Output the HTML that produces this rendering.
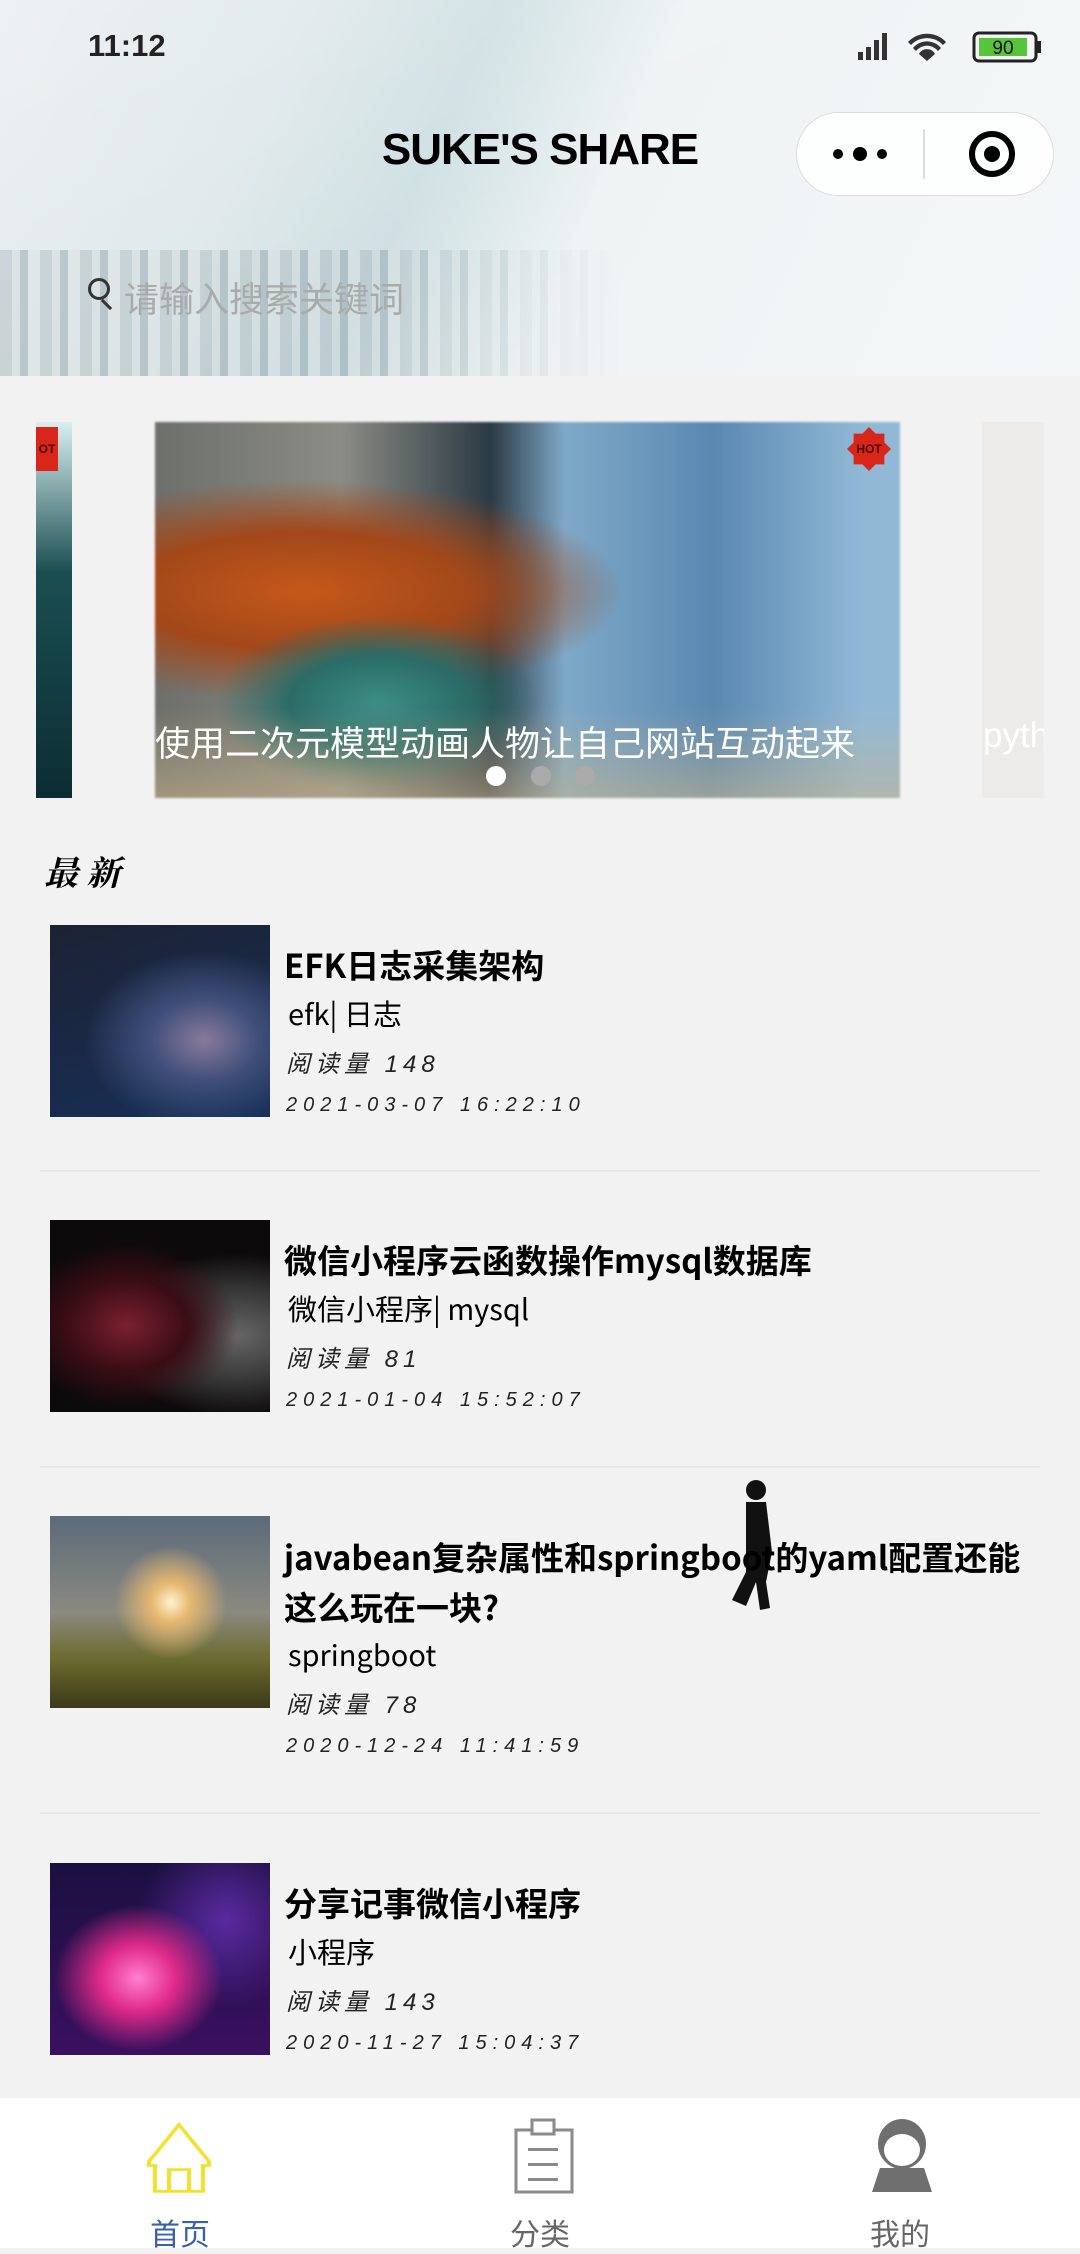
<!DOCTYPE html>
<html><head><meta charset="utf-8"><style>
*{margin:0;padding:0;box-sizing:border-box}
body{width:1080px;height:2248px;overflow:hidden;position:relative;background:#f3f2f2;font-family:"Liberation Sans","Noto Sans CJK SC",sans-serif;color:#000}
.abs{position:absolute}
.hdr{left:0;top:0;width:1080px;height:376px;background:
linear-gradient(160deg,rgba(255,255,255,.2) 0%,rgba(255,255,255,0) 50%),
linear-gradient(115deg,#e9eef0 0%,#dfe8ea 25%,#cfe0e3 40%,#eef3f4 55%,#f4f7f8 100%);overflow:hidden}
.shelf{left:0;top:250px;width:620px;height:126px;background:repeating-linear-gradient(90deg,#9aa9ae 0 12px,#c9d3d5 12px 20px,#6e8690 20px 28px,#d8dfe0 28px 40px);opacity:.35;-webkit-mask:linear-gradient(90deg,#000 60%,transparent)}
.time{left:88px;top:28px;font-size:31px;font-weight:bold;color:#222}
.title{left:0;width:1080px;top:125px;text-align:center;font-size:44px;font-weight:bold;letter-spacing:-1px}
.cap{left:796px;top:112px;width:258px;height:84px;border-radius:42px;background:rgba(255,255,255,.85);border:1px solid #ddd}
.sp{left:88px;top:278px;width:22px;height:22px;border:3px solid #333;border-radius:50%}
.sp2{left:105px;top:298px;width:3px;height:13px;background:#333;transform:rotate(-45deg)}
.ph{left:124px;top:272px;font-size:35px;color:#aaa}
.card{left:155px;top:422px;width:745px;height:376px;background:
radial-gradient(ellipse at 30% 75%,#3d8e86 0,#2b6c67 12%,transparent 22%),
radial-gradient(ellipse at 20% 45%,#c5581a 0,#a2481a 20%,transparent 38%),
linear-gradient(90deg,#6d6f6a 0%,#8b8c85 25%,#2c3a44 45%,#7fa9c8 55%,#5a88b1 75%,#91b9d6 95%),#555;filter:blur(1px)}
.card:after{content:"";position:absolute;left:0;right:0;bottom:0;height:90px;background:linear-gradient(#0000,#c8b48c90)}
.lp{left:36px;top:422px;width:36px;height:376px;background:linear-gradient(#d8efee,#1b4e52 40%,#0b2d33)}
.rp{left:982px;top:422px;width:62px;height:376px;background:#ecebea}
.capt{left:155px;top:716px;font-size:35px;color:#fff;white-space:nowrap}
.hot{width:44px;height:44px;background:#d8271a;clip-path:polygon(50% 0,65% 15%,85% 15%,85% 35%,100% 50%,85% 65%,85% 85%,65% 85%,50% 100%,35% 85%,15% 85%,15% 65%,0 50%,15% 35%,15% 15%,35% 15%);font-size:12px;font-weight:bold;color:#4a0b06;text-align:center;line-height:44px}
.dot{width:20px;height:20px;border-radius:50%;background:#aaa}
.new{left:44px;top:846px;font-size:34px;font-weight:bold;font-family:"Liberation Serif","Noto Serif CJK SC",serif;font-style:italic}
.img{left:50px;width:220px;height:192px}
.t{left:284px;font-size:33px;font-weight:bold;width:745px;line-height:50px;font-family:"Noto Sans CJK SC",sans-serif}
.tag{left:288px;font-size:29px;font-family:"Noto Sans CJK SC",sans-serif;line-height:40px}
.rd{left:286px;font-size:24px;font-style:italic;letter-spacing:5px;color:#222}
.dt{left:286px;font-size:20px;font-style:italic;letter-spacing:6px;color:#222}
.div{left:40px;width:1000px;height:2px;background:#e3e8e7}
.tab{left:0;top:2098px;width:1080px;height:150px;background:#fff}
.tl{font-size:30px;top:2210px}
</style></head><body>
<div class="abs hdr"><div class="abs shelf"></div></div>
<div class="abs time">11:12</div>
<svg class="abs" style="left:858px;top:30px" width="190" height="36">
<g fill="#333"><rect x="0" y="22" width="5" height="8"/><rect x="8" y="17" width="5" height="13"/><rect x="16" y="10" width="5" height="20"/><rect x="24" y="3" width="5" height="27"/>
<path d="M50 12a26 26 0 0 1 38 0l-3 3a22 22 0 0 0-32 0z M55 18a18 18 0 0 1 28 0l-3 3a14 14 0 0 0-22 0z M61 24a9 9 0 0 1 16 0l-8 7z"/></g>
<rect x="116" y="3" width="62" height="28" rx="5" fill="none" stroke="#222" stroke-width="3"/><rect x="121" y="8" width="48" height="18" fill="#57c43b"/><rect x="179" y="11" width="4" height="12" fill="#222"/>
<text x="145" y="24" font-size="19" text-anchor="middle" font-family="Liberation Sans" fill="#111">90</text></svg>
<div class="abs title">SUKE'S SHARE</div>
<div class="abs cap"></div>
<svg class="abs" style="left:796px;top:112px" width="258" height="84"><circle cx="42" cy="42" r="5"/><circle cx="64" cy="42" r="7"/><circle cx="86" cy="42" r="5"/><line x1="128" y1="17" x2="128" y2="67" stroke="#ddd" stroke-width="2"/><circle cx="196" cy="42" r="20" fill="none" stroke="#000" stroke-width="6"/><circle cx="196" cy="42" r="8"/></svg>
<div class="abs sp"></div><div class="abs sp2"></div>
<div class="abs ph">请输入搜索关键词</div>
<div class="abs lp"></div><div class="abs rp"></div>
<div class="abs card"></div>
<div class="abs capt">使用二次元模型动画人物让自己网站互动起来</div>
<div class="abs capt" style="left:983px;width:61px;overflow:hidden">python</div>
<div class="abs hot" style="left:847px;top:427px">HOT</div>
<div class="abs hot" style="left:14px;top:427px;clip-path:inset(0 0 0 22px)"><span style="margin-left:22px">OT</span></div>
<div class="abs dot" style="left:486px;top:766px;background:#fff"></div>
<div class="abs dot" style="left:531px;top:766px"></div>
<div class="abs dot" style="left:575px;top:766px"></div>
<div class="abs new">最 新</div>

<div class="abs img" style="top:925px;background:radial-gradient(ellipse at 70% 60%,#8a7a9c 0,#3f4f7a 25%,transparent 55%),linear-gradient(160deg,#1b2233,#1a2a4a 60%,#15305a)"></div>
<div class="abs t" style="top:939px">EFK日志采集架构</div>
<div class="abs tag" style="top:993px">efk| 日志</div>
<div class="abs rd" style="top:1044px">阅读量 148</div>
<div class="abs dt" style="top:1094px">2021-03-07 16:22:10</div>
<div class="abs div" style="top:1170px"></div>

<div class="abs img" style="top:1220px;background:radial-gradient(ellipse at 35% 55%,#7a2030 0,#3a0d15 30%,transparent 55%),radial-gradient(ellipse at 85% 60%,#666 0,#333 30%,transparent 50%),#0d0a0b"></div>
<div class="abs t" style="top:1234px">微信小程序云函数操作mysql数据库</div>
<div class="abs tag" style="top:1288px">微信小程序| mysql</div>
<div class="abs rd" style="top:1339px">阅读量 81</div>
<div class="abs dt" style="top:1389px">2021-01-04 15:52:07</div>
<div class="abs div" style="top:1466px"></div>

<svg class="abs" style="left:716px;top:1478px" width="80" height="136"><g fill="#111"><circle cx="40" cy="12" r="10"/><path d="M30 24h20l6 50-6 30 4 26-10 2-4-28-10 24-14-6 14-28z"/></g></svg>
<div class="abs img" style="top:1516px;background:radial-gradient(circle at 55% 45%,#fff3d0 0,#e6b870 12%,transparent 35%),linear-gradient(#5c6a7a 0,#8a8a80 50%,#6b6a2e 75%,#3c3a18)"></div>
<div class="abs t" style="top:1531px">javabean复杂属性和springboot的yaml配置还能这么玩在一块?</div>
<div class="abs tag" style="top:1634px">springboot</div>
<div class="abs rd" style="top:1685px">阅读量 78</div>
<div class="abs dt" style="top:1735px">2020-12-24 11:41:59</div>
<div class="abs div" style="top:1812px"></div>

<div class="abs img" style="top:1863px;background:radial-gradient(ellipse at 40% 60%,#ff7fd0 0,#e02a8a 20%,transparent 45%),radial-gradient(circle at 80% 30%,#5a2aa0 0,transparent 40%),linear-gradient(#1a1040,#3a1060)"></div>
<div class="abs t" style="top:1877px">分享记事微信小程序</div>
<div class="abs tag" style="top:1931px">小程序</div>
<div class="abs rd" style="top:1982px">阅读量 143</div>
<div class="abs dt" style="top:2032px">2020-11-27 15:04:37</div>

<div class="abs tab"></div>
<svg class="abs" style="left:145px;top:2122px" width="70" height="72"><path d="M34 4 L4 58 V64 H10 V102 H58 V64 H64 V58 Z M24 102 V70 H44 V102" fill="none" stroke="#f2e32a" stroke-width="4" transform="scale(1,0.68)"/></svg>
<svg class="abs" style="left:510px;top:2118px" width="64" height="76"><g fill="none" stroke="#8a8a8a" stroke-width="3"><rect x="6" y="12" width="56" height="62"/><rect x="22" y="2" width="22" height="14" fill="#fff"/></g><g fill="#8a8a8a"><rect x="18" y="30" width="30" height="3"/><rect x="18" y="45" width="30" height="3"/><rect x="18" y="60" width="30" height="3"/></g></svg>
<svg class="abs" style="left:870px;top:2118px" width="64" height="76"><g fill="#6f6f6f"><ellipse cx="32" cy="26" rx="24" ry="25"/><path d="M10 50 h44 l8 24 h-60z"/></g><ellipse cx="32" cy="32" rx="18" ry="16" fill="#fff"/></svg>
<div class="abs tl" style="left:150px;color:#3a5fb0">首页</div>
<div class="abs tl" style="left:510px;color:#666">分类</div>
<div class="abs tl" style="left:870px;color:#666">我的</div>
</body></html>
